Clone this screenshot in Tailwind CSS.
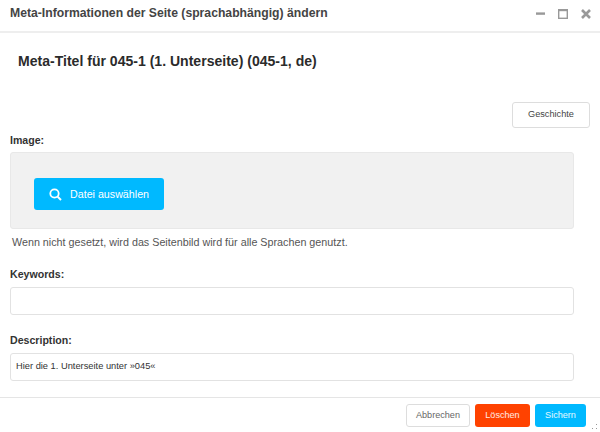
<!DOCTYPE html>
<html lang="de">
<head>
  <meta charset="UTF-8">
  <title>Meta-Informationen</title>
  <script src="https://cdn.jsdelivr.net/npm/@tailwindcss/browser@4"></script>
</head>
<body class="bg-white font-['Liberation_Sans',Arial,sans-serif] text-[#333] w-[600px] h-[432px] overflow-hidden relative">
  <!-- Header -->
  <div class="h-[33px] border-b-2 border-[#eee] pl-[10px] pr-[9px] flex items-center justify-between">
    <div class="text-[12.2px] font-bold text-[#444] leading-none pb-[5px]">Meta-Informationen der Seite (sprachabhängig) ändern</div>
    <div class="flex items-center gap-[13px] pb-[4px]">
      <svg width="9" height="10" viewBox="0 0 9 10"><rect x="0" y="3.4" width="9" height="2.4" fill="#999"/></svg>
      <svg width="10" height="10" viewBox="0 0 10 10"><rect x="0.7" y="0.7" width="8.6" height="8.6" fill="none" stroke="#999" stroke-width="1.4"/><rect x="0" y="0" width="10" height="2.2" fill="#999"/></svg>
      <svg width="10" height="10" viewBox="0 0 10 10"><path d="M1 1l8 8M9 1l-8 8" stroke="#999" stroke-width="2.6" fill="none"/></svg>
    </div>
  </div>

  <div class="pl-[10px] pr-[26px]">
    <h1 class="pl-[8px] pt-[20px] text-[14.05px] leading-[17px] font-bold text-[#2b2b2b]">Meta-Titel für 045-1 (1. Unterseite) (045-1, de)</h1>

    <div class="flex justify-end mt-[32px] -mr-[16px]">
      <button class="w-[78px] h-[26px] border border-[#ddd] rounded-[3px] bg-white text-[9.2px] text-[#444]">Geschichte</button>
    </div>

    <label class="block mt-[5px] text-[10.6px] leading-[14px] font-bold text-[#333]">Image:</label>
    <div class="mt-[5px] h-[77px] bg-[#f1f1f1] border border-[#e8e8e8] rounded-[3px] pl-[23px] pt-[25px]">
      <button class="w-[130px] h-[32px] bg-[#00b9ff] rounded-[3px] text-white text-[10.7px] flex items-center pl-[15px] gap-[8px]">
        <svg width="13" height="13" viewBox="0 0 13 13"><circle cx="5.5" cy="5.5" r="4.2" fill="none" stroke="#fff" stroke-width="1.8"/><path d="M8.6 8.6l3.4 3.4" stroke="#fff" stroke-width="2" fill="none"/></svg>
        <span>Datei auswählen</span>
      </button>
    </div>
    <p class="mt-[6px] pl-[2px] text-[10.75px] leading-[14px] text-[#555]">Wenn nicht gesetzt, wird das Seitenbild wird für alle Sprachen genutzt.</p>

    <label class="block mt-[18px] text-[10.6px] leading-[14px] font-bold text-[#333]">Keywords:</label>
    <div class="mt-[6px] h-[28px] border border-[#e2e2e2] rounded-[3px]"></div>

    <label class="block mt-[18px] text-[10.6px] leading-[14px] font-bold text-[#333]">Description:</label>
    <div class="mt-[6px] h-[28px] border border-[#e2e2e2] rounded-[3px] pl-[5px] flex items-center text-[9.3px] text-[#333]">Hier die 1. Unterseite unter »045«</div>
  </div>

  <!-- Footer -->
  <div class="absolute left-0 right-0 top-[397px] h-[35px] border-t border-[#e5e5e5] flex justify-end items-start gap-[5px] pt-[6px] pr-[14px]">
    <button class="w-[64px] h-[23px] border border-[#ddd] rounded-[3px] bg-white text-[9.1px] text-[#666]">Abbrechen</button>
    <button class="w-[55px] h-[23px] rounded-[3px] bg-[#ff4200] text-[9.1px] text-white/90">Löschen</button>
    <button class="w-[51px] h-[23px] rounded-[3px] bg-[#00b9ff] text-[9.1px] text-white/90">Sichern</button>
  </div>
  <svg class="absolute right-[2px] bottom-[2px]" width="6" height="6" viewBox="0 0 6 6"><rect x="4" y="0" width="1" height="1" fill="#999"/><rect x="4" y="4" width="1" height="1" fill="#999"/><rect x="0" y="4" width="1" height="1" fill="#999"/></svg>
</body>
</html>
